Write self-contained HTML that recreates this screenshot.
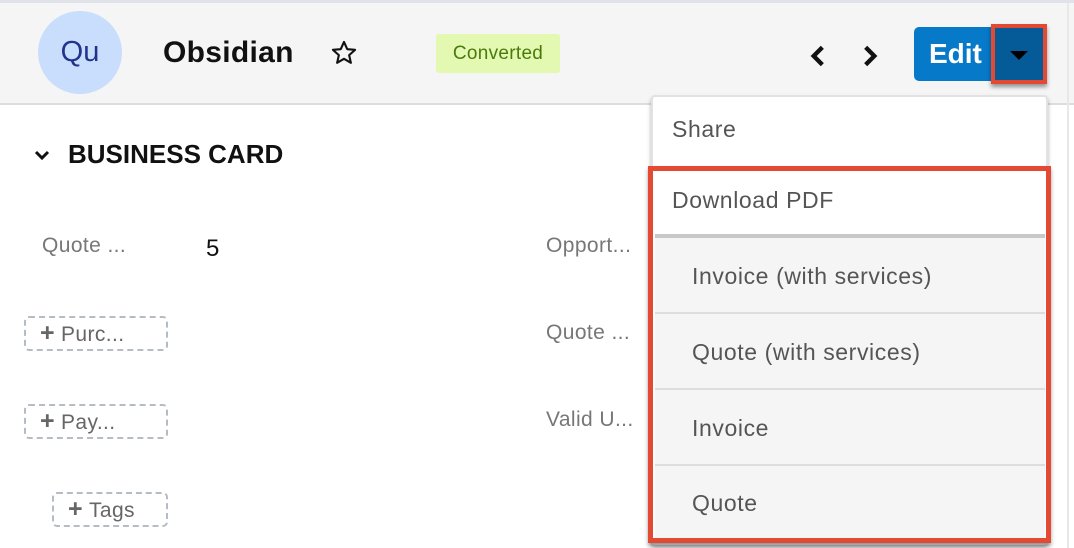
<!DOCTYPE html>
<html><head><style>
*{margin:0;padding:0;box-sizing:border-box}
body{width:1074px;height:548px;overflow:hidden;background:#fff;font-family:"Liberation Sans",sans-serif;position:relative}
.a{position:absolute}
.hdr{left:0;top:0;width:1074px;height:105px;background:#f5f5f5;border-top:3px solid #dfe2e8;border-bottom:2px solid #ddd}
.lbl{color:#777;font-size:21px;letter-spacing:.4px}
.dash{border:2px dashed #b5bcc4;border-radius:5px;height:35px;color:#666;font-size:21px;line-height:31px;padding-left:14px;letter-spacing:.4px}
.dash b{font-size:25px;color:#666;margin-right:6px}
.item{left:655px;width:390px;background:#f5f5f5;color:#555;font-size:23px;letter-spacing:.6px;padding-left:37px;border-bottom:2px solid #ddd}
</style></head><body>
<div class="a hdr"></div>
<div class="a" style="left:1067px;top:3px;width:2px;height:545px;background:#e8e8e8"></div>
<div class="a" style="left:38px;top:11px;width:84px;height:83px;border-radius:50%;background:#c9defc;color:#23338c;font-size:29px;text-align:center;line-height:83px">Qu</div>
<div class="a" style="left:163px;top:36px;font-size:30px;font-weight:bold;color:#111;letter-spacing:.3px">Obsidian</div>
<svg class="a" style="left:330px;top:39px" width="28" height="28" viewBox="0 0 24 24"><path d="M12 2.5l2.8 6.2 6.7.6-5.1 4.5 1.5 6.6L12 17l-5.9 3.4 1.5-6.6-5.1-4.5 6.7-.6z" fill="none" stroke="#111" stroke-width="1.8" stroke-linejoin="round"/></svg>
<div class="a" style="left:436px;top:34px;width:124px;height:39px;background:#e3f9b2;border-radius:3px;color:#4b7a0b;font-size:19px;text-align:center;line-height:39px;letter-spacing:.3px">Converted</div>
<svg class="a" style="left:805px;top:43px" width="26" height="26" viewBox="0 0 24 24"><path d="M16 4l-8 8 8 8" fill="none" stroke="#111" stroke-width="4"/></svg>
<svg class="a" style="left:857px;top:43px" width="26" height="26" viewBox="0 0 24 24"><path d="M8 4l8 8-8 8" fill="none" stroke="#111" stroke-width="4"/></svg>
<div class="a" style="left:914px;top:27px;width:120px;height:54px;background:#0679c8;border-radius:5px;color:#fff;font-weight:bold;font-size:28px;line-height:54px;padding-left:15px">Edit</div>
<div class="a" style="left:991px;top:24px;width:56px;height:60px;background:#045b98;border:4px solid #e34a33;box-shadow:0 3px 4px rgba(0,0,0,.4)"></div>
<div class="a" style="left:1010px;top:51px;width:0;height:0;border-left:9px solid transparent;border-right:9px solid transparent;border-top:9px solid #000"></div>
<svg class="a" style="left:32px;top:145px" width="20" height="20" viewBox="0 0 20 20"><path d="M4 7l6 6 6-6" fill="none" stroke="#111" stroke-width="3"/></svg>
<div class="a" style="left:68px;top:139px;font-size:26px;font-weight:bold;color:#111">BUSINESS CARD</div>
<div class="a lbl" style="left:42px;top:234px">Quote ...</div>
<div class="a" style="left:206px;top:235px;font-size:24px;color:#111">5</div>
<div class="a lbl" style="left:546px;top:234px">Opport...</div>
<div class="a lbl" style="left:546px;top:321px">Quote ...</div>
<div class="a lbl" style="left:546px;top:408px">Valid U...</div>
<div class="a dash" style="left:24px;top:316px;width:144px"><b>+</b>Purc...</div>
<div class="a dash" style="left:24px;top:404px;width:144px"><b>+</b>Pay...</div>
<div class="a dash" style="left:52px;top:492px;width:116px"><b>+</b>Tags</div>
<div class="a" style="left:651px;top:95px;width:397px;height:450px;background:#fff;border:2px solid #e2e2e2;border-radius:4px;box-shadow:0 3px 4px rgba(0,0,0,.3)"></div>
<div class="a" style="left:672px;top:116px;color:#555;font-size:23px;letter-spacing:.6px">Share</div>
<div class="a" style="left:655px;top:174px;width:390px;height:64px;background:#fff;border-bottom:4px solid #c8c8c8;color:#555;font-size:23px;letter-spacing:.6px;padding-left:17px;line-height:52px">Download PDF</div>
<div class="a item" style="top:238px;height:76px;line-height:76px">Invoice (with services)</div>
<div class="a item" style="top:314px;height:76px;line-height:76px">Quote (with services)</div>
<div class="a item" style="top:390px;height:76px;line-height:76px">Invoice</div>
<div class="a item" style="top:466px;height:74px;line-height:74px;border-bottom:none">Quote</div>
<div class="a" style="left:648px;top:166px;width:403px;height:377px;border:5px solid #e34a33;box-shadow:0 3px 4px rgba(0,0,0,.35)"></div>
</body></html>
